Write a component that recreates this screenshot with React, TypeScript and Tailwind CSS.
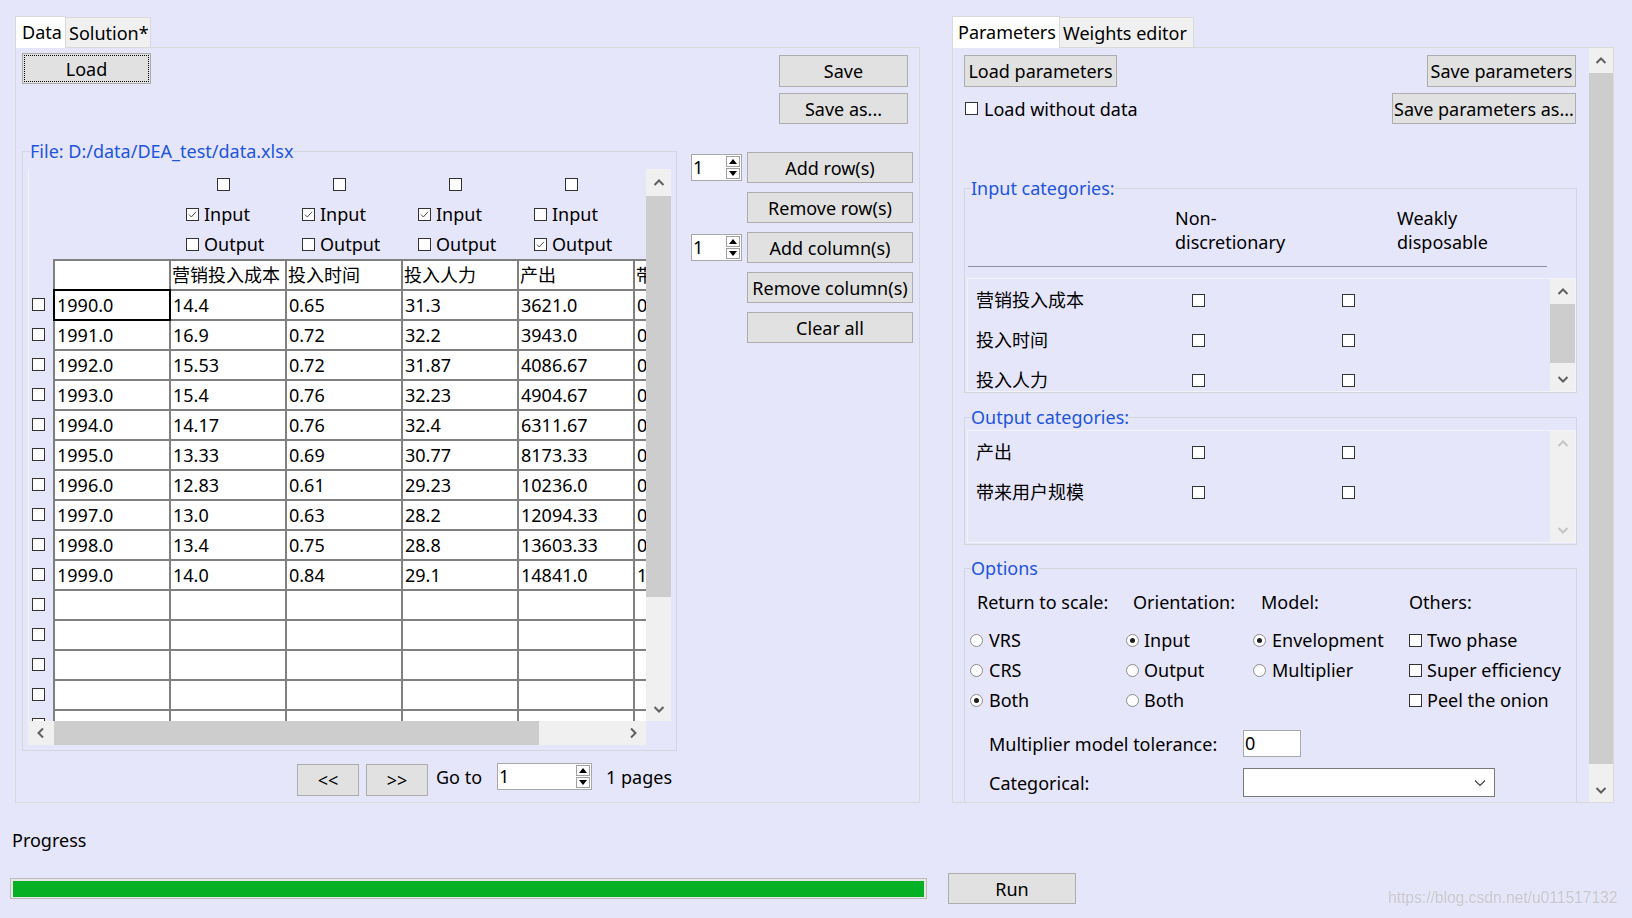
import type { ReactNode } from 'react';

type Dir = 'up' | 'down' | 'left' | 'right';

const CHEVRON_PATHS: Record<Dir, string> = {
  up: 'M1.5 8L6 3.5L10.5 8',
  down: 'M1.5 4L6 8.5L10.5 4',
  left: 'M8 1.5L3.5 6L8 10.5',
  right: 'M4 1.5L8.5 6L4 10.5',
};

const COLUMNS = [
  { name: '营销投入成本', input: true, output: false },
  { name: '投入时间', input: true, output: false },
  { name: '投入人力', input: true, output: false },
  { name: '产出', input: false, output: true },
  { name: '带来用户规模', input: false, output: true },
];

// only the first four role blocks fall inside the viewport
const VISIBLE_ROLE_COLUMNS = COLUMNS.slice(0, 4);

const ROWS: string[][] = [
  ['1990.0', '14.4', '0.65', '31.3', '3621.0', '0.36'],
  ['1991.0', '16.9', '0.72', '32.2', '3943.0', '0.41'],
  ['1992.0', '15.53', '0.72', '31.87', '4086.67', '0.45'],
  ['1993.0', '15.4', '0.76', '32.23', '4904.67', '0.52'],
  ['1994.0', '14.17', '0.76', '32.4', '6311.67', '0.6'],
  ['1995.0', '13.33', '0.69', '30.77', '8173.33', '0.68'],
  ['1996.0', '12.83', '0.61', '29.23', '10236.0', '0.77'],
  ['1997.0', '13.0', '0.63', '28.2', '12094.33', '0.85'],
  ['1998.0', '13.4', '0.75', '28.8', '13603.33', '0.93'],
  ['1999.0', '14.0', '0.84', '29.1', '14841.0', '1.02'],
];

const EMPTY_ROWS = 6;

const INPUT_CATEGORIES = ['营销投入成本', '投入时间', '投入人力'];
const OUTPUT_CATEGORIES = ['产出', '带来用户规模'];

function Chevron({ dir, color = '#606060' }: { dir: Dir; color?: string }) {
  return (
    <svg width="12" height="12" viewBox="0 0 12 12">
      <path d={CHEVRON_PATHS[dir]} fill="none" stroke={color} strokeWidth="2" />
    </svg>
  );
}

function CheckBox({ checked = false }: { checked?: boolean }) {
  return (
    <span className="flex h-[13px] w-[13px] shrink-0 items-center justify-center border border-[#333333] bg-white">
      {checked && (
        <svg width="11" height="11" viewBox="0 0 11 11">
          <path d="M2 5.6L4.3 8L9 2.8" fill="none" stroke="#4a4a4a" strokeWidth="1" />
        </svg>
      )}
    </span>
  );
}

function Radio({ checked = false }: { checked?: boolean }) {
  return (
    <span className="flex h-[13px] w-[13px] shrink-0 items-center justify-center rounded-full border border-[#8c8c8c] bg-white">
      {checked && <span className="h-[5px] w-[5px] rounded-full bg-[#1e1e1e]" />}
    </span>
  );
}

function Button({ className = '', children }: { className?: string; children: ReactNode }) {
  return (
    <button
      type="button"
      className={`flex shrink-0 items-center justify-center border border-[#adadad] bg-[#e1e1e1] leading-[24px] ${className}`}
    >
      {children}
    </button>
  );
}

function SpinBox({ className = '', value = '1' }: { className?: string; value?: string }) {
  return (
    <div className={`flex h-[27px] shrink-0 border border-[#a9a9a9] bg-white ${className}`}>
      <div className="flex-1 pl-[1px] leading-[25px]">{value}</div>
      <div className="flex w-[15px] flex-col gap-[1px] py-[1px] pr-[1px]">
        <div className="flex flex-1 items-center justify-center border border-[#a0a0a0] bg-white">
          <svg width="8" height="5" viewBox="0 0 8 5">
            <path d="M0 5L4 0L8 5Z" fill="#000" />
          </svg>
        </div>
        <div className="flex flex-1 items-center justify-center border border-[#a0a0a0] bg-white">
          <svg width="8" height="5" viewBox="0 0 8 5">
            <path d="M0 0L4 5L8 0Z" fill="#000" />
          </svg>
        </div>
      </div>
    </div>
  );
}

function VScroll({
  className = '',
  upClass = 'h-[25px]',
  thumbClass,
  disabled = false,
}: {
  className?: string;
  upClass?: string;
  thumbClass?: string;
  disabled?: boolean;
}) {
  const color = disabled ? '#c4c4c4' : '#606060';
  return (
    <div className={`flex shrink-0 flex-col bg-[#f0f0f0] ${className}`}>
      <div className={`flex shrink-0 items-center justify-center ${upClass}`}>
        <Chevron dir="up" color={color} />
      </div>
      {thumbClass && <div className={`shrink-0 bg-[#cdcdcd] ${thumbClass}`} />}
      <div className="flex-1" />
      <div className="flex h-[25px] shrink-0 items-center justify-center">
        <Chevron dir="down" color={color} />
      </div>
    </div>
  );
}

function TableView() {
  return (
    <div className="grid grid-cols-[618px_25px] grid-rows-[552px_24px]">
      <div className="overflow-hidden border-l border-[#f4f4fb]">
        {/* per-column role checkboxes */}
        <div className="flex">
          <div className="w-[140px] shrink-0" />
          {VISIBLE_ROLE_COLUMNS.map((col) => (
            <div key={col.name} className="w-[116px] shrink-0">
              <div className="flex h-[30px] items-center pl-[48px]">
                <CheckBox />
              </div>
              <div className="flex h-[30px] items-center gap-[5px] pl-[17px]">
                <CheckBox checked={col.input} />
                Input
              </div>
              <div className="flex h-[30px] items-center gap-[5px] pl-[17px]">
                <CheckBox checked={col.output} />
                Output
              </div>
            </div>
          ))}
        </div>

        {/* header row */}
        <div className="flex">
          <div className="w-[24px] shrink-0" />
          <div className="flex shrink-0 gap-[2px] bg-[#808080] p-[2px]">
            {['', ...COLUMNS.map((c) => c.name)].map((h, i) => (
              <div
                key={i}
                className="h-[28px] w-[114px] shrink-0 overflow-hidden whitespace-nowrap bg-white pl-[1px] leading-[28px]"
              >
                {h}
              </div>
            ))}
          </div>
        </div>

        {ROWS.map((row, r) => (
          <div key={row[0]} className="flex">
            <div className="w-[24px] shrink-0 pl-[3px] pt-[7px]">
              <CheckBox />
            </div>
            <div className="flex shrink-0 gap-[2px] bg-[#808080] px-[2px] pb-[2px]">
              {row.map((cell, c) => (
                <div
                  key={c}
                  className={`h-[28px] w-[114px] shrink-0 overflow-hidden whitespace-nowrap bg-white pl-[2px] leading-[28px] ${
                    r === 0 && c === 0 ? 'relative z-10 outline-2 outline-black' : ''
                  }`}
                >
                  {cell}
                </div>
              ))}
            </div>
          </div>
        ))}

        {Array.from({ length: EMPTY_ROWS }).map((_, r) => (
          <div key={`e${r}`} className="flex">
            <div className="w-[24px] shrink-0 pl-[3px] pt-[7px]">
              <CheckBox />
            </div>
            <div className="flex shrink-0 gap-[2px] bg-[#808080] px-[2px] pb-[2px]">
              {Array.from({ length: 6 }).map((__, c) => (
                <div key={c} className="h-[28px] w-[114px] shrink-0 bg-white" />
              ))}
            </div>
          </div>
        ))}
      </div>

      <VScroll upClass="h-[27px]" thumbClass="h-[401px]" />

      <div className="flex bg-[#f0f0f0]">
        <div className="flex w-[25px] items-center justify-center">
          <Chevron dir="left" />
        </div>
        <div className="ml-px w-[485px] bg-[#cdcdcd]" />
        <div className="flex-1" />
        <div className="flex w-[26px] items-center justify-center">
          <Chevron dir="right" />
        </div>
      </div>
      <div />
    </div>
  );
}

function DataTab() {
  return (
    <div className="ml-[15px] w-[905px] shrink-0">
      <div className="flex h-[31px] items-end">
        <div className="relative z-10 -mb-px h-[32px] w-[51px] border border-b-0 border-[#d9d9d9] bg-white pl-[6px] leading-[30px]">
          Data
        </div>
        <div className="h-[30px] w-[85px] border border-b-0 border-l-0 border-[#d9d9d9] bg-[#f0f0f0] pl-[3px] leading-[30px]">
          Solution*
        </div>
      </div>

      <div className="flex h-[756px] flex-col border border-[#d9d9d9]">
        <div className="flex h-[91px] shrink-0 items-start justify-between">
          <Button className="ml-[6px] mt-[5px] h-[31px] w-[129px] outline-1 -outline-offset-3 outline-black outline-dotted">
            Load
          </Button>
          <div className="mr-[11px] mt-[7px] flex flex-col gap-[6px]">
            <Button className="h-[32px] w-[129px]">Save</Button>
            <Button className="h-[31px] w-[129px]">Save as...</Button>
          </div>
        </div>

        <div className="flex items-start pl-[6px]">
          <div className="flex flex-col">
            <fieldset className="w-[655px] border border-[#d5d5dd] pb-[5px] pl-[5px] pr-[5px] pt-[6px]">
              <legend className="ml-[2px] text-[#1c55e0]">File: D:/data/DEA_test/data.xlsx</legend>
              <TableView />
            </fieldset>

            <div className="ml-[275px] mt-[13px] flex items-start">
              <Button className="h-[32px] w-[62px]">&lt;&lt;</Button>
              <Button className="ml-[7px] h-[32px] w-[62px]">&gt;&gt;</Button>
              <span className="ml-[8px] leading-[27px]">Go to</span>
              <SpinBox className="ml-[15px] -mt-px w-[95px]" />
              <span className="ml-[14px] leading-[27px]">1 pages</span>
            </div>
          </div>

          <div className="ml-[14px] mt-[13px] flex flex-col gap-[9px]">
            <div className="flex items-center gap-[5px]">
              <SpinBox className="w-[51px]" />
              <Button className="h-[31px] w-[166px]">Add row(s)</Button>
            </div>
            <Button className="ml-[56px] h-[31px] w-[166px]">Remove row(s)</Button>
            <div className="flex items-center gap-[5px]">
              <SpinBox className="w-[51px]" />
              <Button className="h-[31px] w-[166px]">Add column(s)</Button>
            </div>
            <Button className="ml-[56px] h-[31px] w-[166px]">Remove column(s)</Button>
            <Button className="ml-[56px] h-[31px] w-[166px]">Clear all</Button>
          </div>
        </div>
      </div>
    </div>
  );
}

function CategoryList({
  items,
  className = '',
  thumbClass,
  disabled = false,
}: {
  items: string[];
  className?: string;
  thumbClass?: string;
  disabled?: boolean;
}) {
  return (
    <div className={`flex w-[609px] border border-[#f2f2f8] ${className}`}>
      <div className="flex-1 overflow-hidden pt-px">
        {items.map((name) => (
          <div key={name} className="flex h-[40px] items-center">
            <span className="w-[224px] shrink-0 pl-[8px]">{name}</span>
            <CheckBox />
            <span className="ml-[137px]">
              <CheckBox />
            </span>
          </div>
        ))}
      </div>
      <VScroll className="w-[25px]" thumbClass={thumbClass} disabled={disabled} />
    </div>
  );
}

function RadioItem({ label, checked = false, gap = 'gap-[6px]' }: { label: string; checked?: boolean; gap?: string }) {
  return (
    <div className={`flex h-[30px] items-center ${gap}`}>
      <Radio checked={checked} />
      {label}
    </div>
  );
}

function CheckItem({ label }: { label: string }) {
  return (
    <div className="flex h-[30px] items-center gap-[5px]">
      <CheckBox />
      {label}
    </div>
  );
}

function ParametersTab() {
  return (
    <div className="ml-[32px] w-[662px] shrink-0">
      <div className="flex h-[31px] items-end">
        <div className="relative z-10 -mb-px h-[32px] w-[108px] border border-b-0 border-[#d9d9d9] bg-white pl-[5px] leading-[30px]">
          Parameters
        </div>
        <div className="h-[30px] w-[134px] border border-b-0 border-l-0 border-[#d9d9d9] bg-[#f0f0f0] pl-[3px] leading-[30px]">
          Weights editor
        </div>
      </div>

      <div className="flex h-[756px] border border-[#d9d9d9]">
        <div className="h-full flex-1 overflow-hidden">
          <div className="flex items-start justify-between pt-[7px]">
            <Button className="ml-[11px] h-[32px] w-[153px]">Load parameters</Button>
            <Button className="mr-[13px] h-[32px] w-[149px]">Save parameters</Button>
          </div>
          <div className="mt-[6px] flex items-center justify-between">
            <div className="ml-[12px] flex items-center gap-[6px]">
              <CheckBox />
              Load without data
            </div>
            <Button className="mr-[13px] h-[31px] w-[184px]">Save parameters as...</Button>
          </div>

          <fieldset className="ml-[11px] mt-[52px] w-[613px] border border-[#d5d5dd] pl-[2px] pt-[6px]">
            <legend className="ml-[4px] text-[#1c55e0]">Input categories:</legend>
            <div className="flex">
              <div className="ml-[208px] w-[222px]">
                Non-
                <br />
                discretionary
              </div>
              <div>
                Weakly
                <br />
                disposable
              </div>
            </div>
            <div className="ml-px mt-[12px] h-px w-[579px] bg-[#8e8e9e]" />
            <CategoryList className="mt-[11px] h-[114px]" items={INPUT_CATEGORIES} thumbClass="h-[59px]" />
          </fieldset>

          <fieldset className="ml-[11px] mt-[12px] w-[613px] border border-[#d5d5dd] pb-px pl-[2px] pt-px">
            <legend className="ml-[4px] text-[#1c55e0]">Output categories:</legend>
            <CategoryList className="h-[113px]" items={OUTPUT_CATEGORIES} disabled />
          </fieldset>

          <fieldset className="ml-[11px] mt-[11px] w-[613px] border border-[#d5d5dd] pb-[40px] pl-[2px] pt-[10px]">
            <legend className="ml-[4px] text-[#1c55e0]">Options</legend>
            <div className="ml-[3px] flex">
              <div className="w-[156px] pl-[7px]">Return to scale:</div>
              <div className="w-[127px] pl-[7px]">Orientation:</div>
              <div className="w-[156px] pl-[8px]">Model:</div>
              <div>Others:</div>
            </div>
            <div className="ml-[3px] mt-[11px] flex">
              <div className="w-[156px]">
                <RadioItem label="VRS" />
                <RadioItem label="CRS" />
                <RadioItem label="Both" checked />
              </div>
              <div className="w-[127px]">
                <RadioItem label="Input" checked gap="gap-[5px]" />
                <RadioItem label="Output" gap="gap-[5px]" />
                <RadioItem label="Both" gap="gap-[5px]" />
              </div>
              <div className="w-[156px]">
                <RadioItem label="Envelopment" checked />
                <RadioItem label="Multiplier" />
              </div>
              <div>
                <CheckItem label="Two phase" />
                <CheckItem label="Super efficiency" />
                <CheckItem label="Peel the onion" />
              </div>
            </div>
            <div className="ml-[22px] mt-[15px] flex items-center">
              <span className="w-[254px]">Multiplier model tolerance:</span>
              <div className="h-[27px] w-[58px] border border-[#a9a9a9] bg-white pl-[1px] leading-[25px]">0</div>
            </div>
            <div className="ml-[22px] mt-[11px] flex items-center">
              <span className="w-[254px]">Categorical:</span>
              <div className="flex h-[29px] w-[252px] items-center justify-end border border-[#7a7a7a] bg-white pr-[8px]">
                <svg width="12" height="8" viewBox="0 0 12 8">
                  <path d="M1 1.5L6 6.5L11 1.5" fill="none" stroke="#3c3c3c" strokeWidth="1.1" />
                </svg>
              </div>
            </div>
          </fieldset>
        </div>
        <VScroll className="w-[24px]" thumbClass="h-[691px]" />
      </div>
    </div>
  );
}

export default function App() {
  return (
    <div className="relative h-[918px] w-[1632px] overflow-hidden bg-[#e6e6fa] font-['Noto_Sans','Noto_Sans_CJK_SC',sans-serif] text-[18px] leading-[24px] text-black">
      <div className="flex items-start pt-[16px]">
        <DataTab />
        <ParametersTab />
      </div>

      <div className="ml-[12px] mt-[25px]">Progress</div>

      <div className="mt-[21px] flex items-center pl-[10px]">
        <div className="flex h-[21px] w-[917px] items-center border border-[#bcbcbc] bg-[#e6e6e6] px-[2px]">
          <div className="h-[16px] w-full bg-[#06b025]" />
        </div>
        <Button className="ml-[21px] h-[31px] w-[128px]">Run</Button>
      </div>

      <div className="absolute left-[1388px] top-[886px] font-['Liberation_Sans',sans-serif] text-[15.6px] text-[#c6c6d0] [text-shadow:0_0_1px_#ffffff]">
        https://blog.csdn.net/u011517132
      </div>
    </div>
  );
}
